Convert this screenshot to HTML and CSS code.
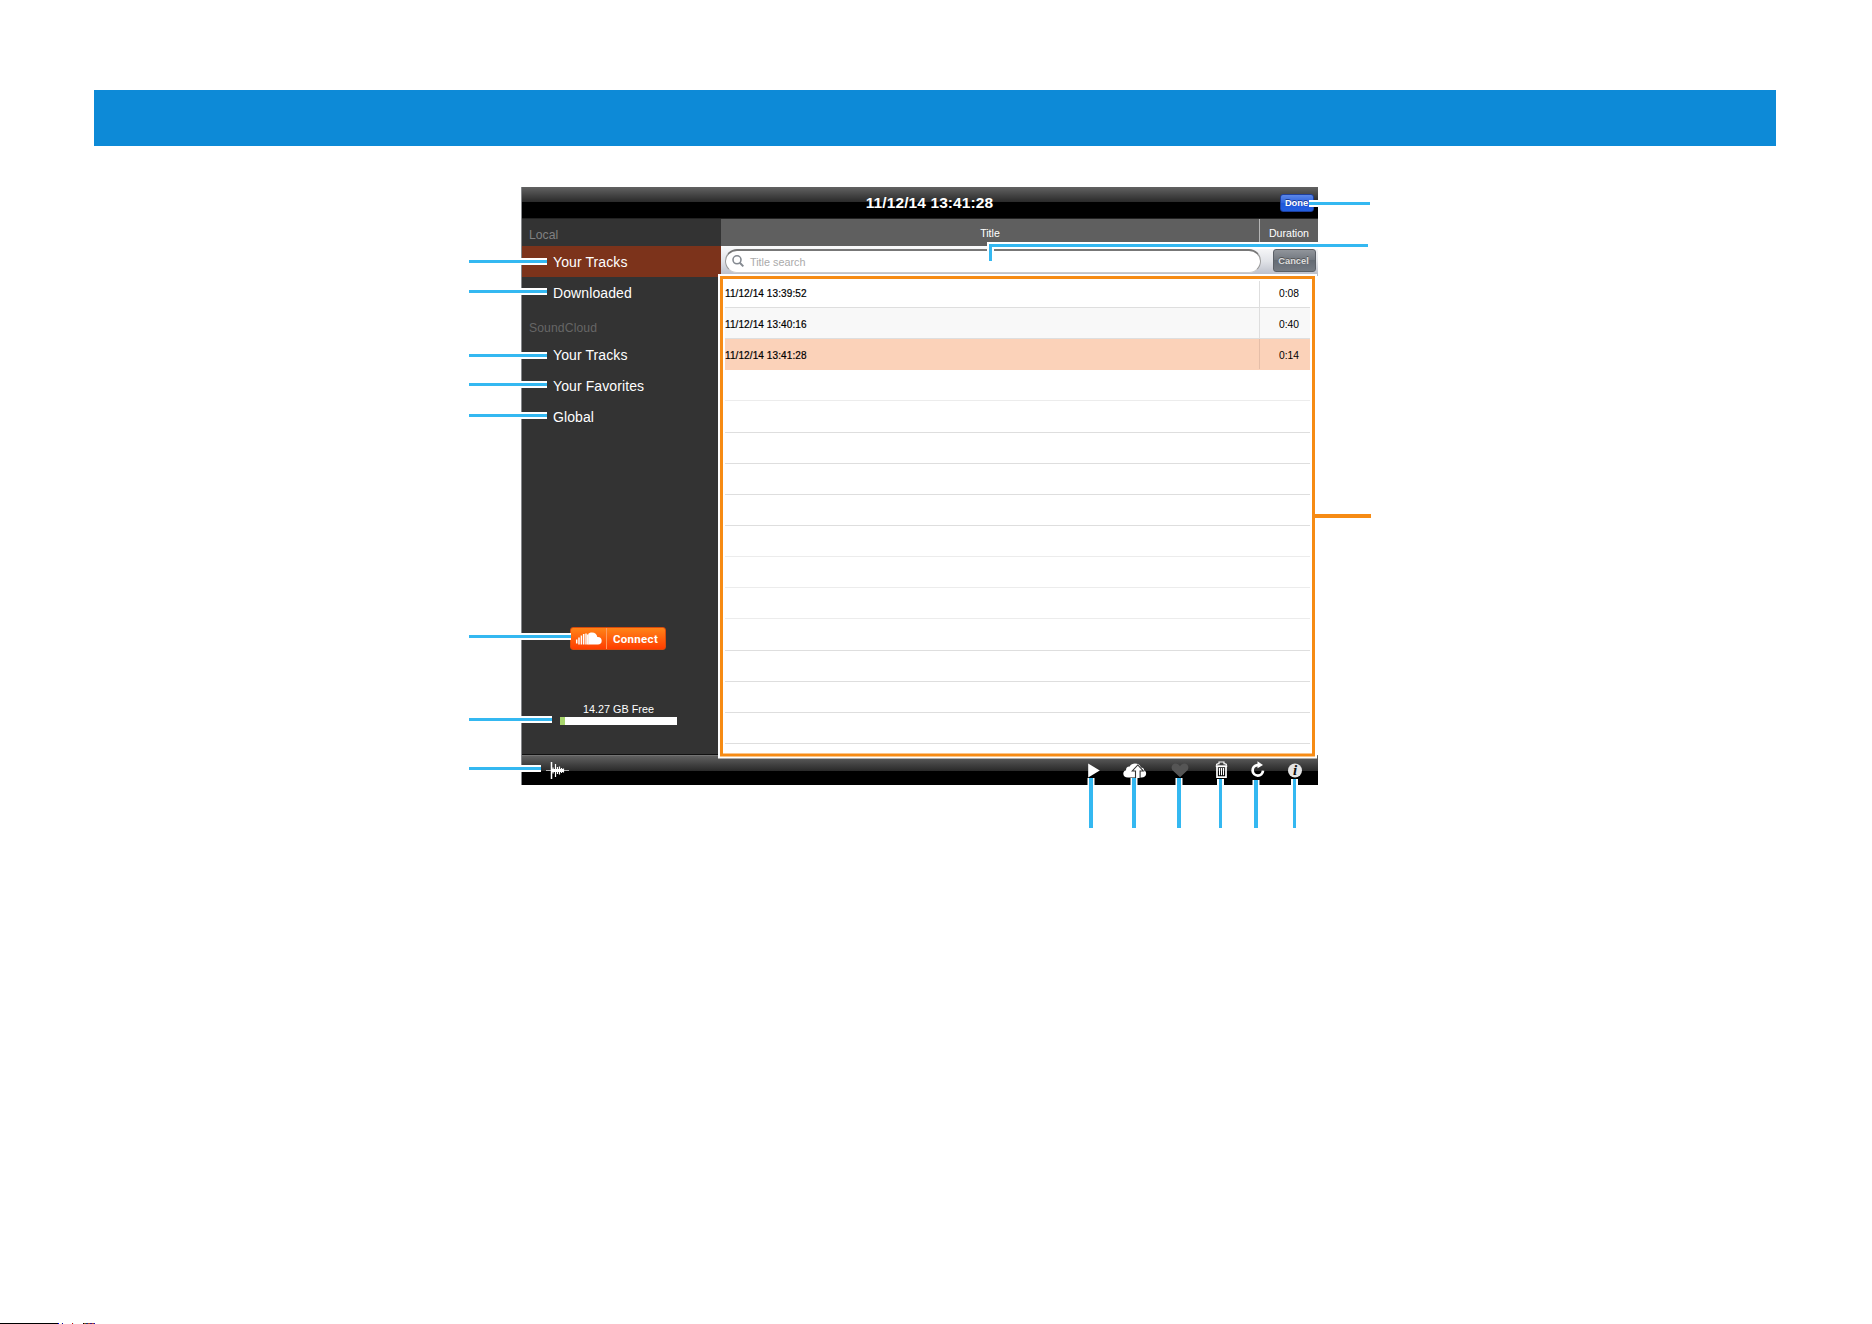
FILE: index.html
```html
<!DOCTYPE html>
<html lang="en">
<head>
  <meta charset="UTF-8" />
  <meta name="viewport" content="width=device-width, initial-scale=1.0" />
  <title>Track list</title>
  <link rel="stylesheet" href="styles.css">
</head>
<body>
  <div class="banner"></div>

  <div class="app">
    <header class="titlebar">
      <h1>11/12/14 13:41:28</h1>
      <button class="done">Done</button>
    </header>

    <div class="main">
      <aside class="sidebar">
        <h2>Local</h2>
        <ul>
          <li class="selected">Your Tracks</li>
          <li>Downloaded</li>
        </ul>
        <h2 class="group">SoundCloud</h2>
        <ul>
          <li>Your Tracks</li>
          <li>Your Favorites</li>
          <li>Global</li>
        </ul>
        <button class="connect">
          <svg width="36" height="23" viewBox="0 0 36 23">
            <path d="M18.300 17.500V6.700c1-.9 2.200-1.300 3.700-1.300 3 0 5 2 5.300 4.600 2.700-.3 4.400 1.300 4.400 3.800s-1.500 3.700-3.700 3.700z" fill="#fff"/>
            <path d="M6.700 12.500v4M9 10.500v7M11.400 8.500v9M13.700 7v10.500M16 6.500v11M17.800 7.500v10" stroke="#fff" stroke-width="1.500"/>
          </svg>
          <span>Connect</span>
        </button>
        <div class="storage">
          <p>14.27 GB Free</p>
          <div class="meter"><div style="width: 4.3%"></div></div>
        </div>
      </aside>

      <section class="content">
        <div class="columns">
          <span>Title</span>
          <span>Duration</span>
        </div>
        <div class="search">
          <div class="field">
            <svg width="14" height="14" viewBox="0 0 14 14" fill="none" stroke="#858a91">
              <circle cx="5" cy="5.800" r="4" stroke-width="1.600"/>
              <path d="M7.800 8.800l3.500 3.600" stroke-width="2"/>
            </svg>
            <span>Title search</span>
          </div>
          <button class="cancel">Cancel</button>
        </div>
        <div class="tracks" id="tracks"></div>
      </section>
    </div>

    <footer class="toolbar">
      <svg class="wave" width="24" height="20" viewBox="0 0 24 20" stroke="#fff">
        <path d="M0 10.500h23" stroke-width=".8" opacity=".8"/>
        <path d="M5.500 2v17" stroke-width="1.500"/>
        <path d="M7 7.500v6M9.500 4v13M11.500 7v7M13.500 6.500v8M15.500 8v5M17.500 8.500v4" stroke-width="1.200"/>
        <path d="M5.500 10.500h12.500" stroke-width="3"/>
      </svg>
      <svg class="play" width="13" height="16" viewBox="0 0 13 16"><path d="M.2 .5l11.600 7-11.600 7z" fill="#fff"/></svg>
      <svg class="cloud" width="24" height="16" viewBox="0 0 24 16">
        <path d="M5 14.500C2 14.500.3 13 .3 10.800c0-1.900 1-3.100 2.700-3.500C2.800 4.600 4.500 3.300 6.700 3.500 7.800 1.500 9.800.6 12 .6c3 0 5.300 1.400 5.900 4 2.100.1 3.300 1.100 3.200 3 1.500.6 2.200 1.800 2 3.400-.3 2.200-1.800 3.500-4.600 3.500z" fill="#fff"/>
        <path d="M12.500 15V8H9.300L14.800 2l5.500 6h-3.200V15" fill="#fff" stroke="#333" stroke-width="1.100"/>
      </svg>
      <svg class="heart" width="18" height="16" viewBox="0 0 18 16"><path d="M9 14.200L2 7.700C.2 5.800.2 3.200 1.700 1.700 3.700-.3 7.300.2 9 3.300c1.700-3.100 5.300-3.600 7.300-1.600 1.500 1.500 1.500 4.100-.3 6z" fill="#555"/></svg>
      <svg class="trash" width="14" height="18" viewBox="0 0 14 18" fill="none" stroke="#fff">
        <path d="M.8 5.200h11.400" stroke-width="1.800"/>
        <path d="M1.500 4.500C1.500 3.200 2.500 2.700 4 2.700V1h5v1.700c1.500 0 2.500.5 2.500 1.800" stroke-width="1.200"/>
        <path d="M2 5.500v10.700h9V5.500" stroke-width="1.700"/>
        <path d="M4.500 7v7.300M6.500 7v7.300M8.500 7v7.300" stroke-width="1.100"/>
      </svg>
      <svg class="reload" width="16" height="18" viewBox="0 0 16 18">
        <path d="M9.500 4.200H7.300a5.200 5.200 0 1 0 5.700 5.500" fill="none" stroke="#fff" stroke-width="2.700"/>
        <path d="M7.500 .3l5.500 3.700-5.500 3.300z" fill="#fff"/>
      </svg>
      <svg class="info" width="14" height="15" viewBox="0 0 14 15">
        <circle cx="7" cy="7.500" r="7" fill="#e4e4e4"/>
        <text x="7" y="12.200" text-anchor="middle">i</text>
      </svg>
    </footer>
  </div>

  <!-- callout lines, a wide white stroke below each coloured one -->
  <svg class="callouts" width="1872" height="900" viewBox="0 0 1872 900">
    <defs>
      <g id="wide">
        <path d="M469 261.500H547M469 291.500H547M469 355.500H547M469 384.500H547M469 415.500H547M469 636.500H571M469 719.500H552M469 768.500H541"/>
        <path d="M1309 203.500H1370M1368 245.500H990.500V261"/>
        <path d="M1220.500 779V828M1294.500 779V828"/>
      </g>
      <path id="thick" d="M1091 778V828M1134 778V828M1179 778V828M1256 780V828"/>
    </defs>
    <use href="#wide" class="halo"/>
    <use href="#thick" class="halo"/>
    <rect x="721.500" y="277.500" width="592" height="477.500" class="halo"/>
    <use href="#wide" class="blue"/>
    <use href="#thick" class="blue thick"/>
    <rect x="721.500" y="277.500" width="592" height="477.500" class="orange"/>
    <path d="M1315 516H1371" class="orange thick"/>
  </svg>

  <div class="edge"></div>

  <script>
    const tracks = [
      { title: "11/12/14 13:39:52", duration: "0:08" },
      { title: "11/12/14 13:40:16", duration: "0:40" },
      { title: "11/12/14 13:41:28", duration: "0:14", selected: true },
    ];

    const list = document.getElementById('tracks');
    for (let i = 0; i < 16; i++) {
      const t = tracks[i];
      const row = document.createElement('div');
      row.className = 'track';
      if (t) {
        if (t.selected) row.classList.add('selected');
        row.innerHTML = `<span>${t.title}</span><span>${t.duration}</span>`;
      }
      list.appendChild(row);
    }
  </script>
</body>
</html>
```

FILE: styles.css
```css
* { box-sizing: border-box; margin: 0; padding: 0; font-family: "Liberation Sans", Arial, sans-serif; }
body { position: relative; width: 1872px; height: 1324px; background: #fff; overflow: hidden; padding-top: 90px; }
ul { list-style: none; }
svg { display: block; flex: none; }
button { border: none; }

.banner { height: 56px; margin: 0 96px 0 94px; background: #0d8ad7; }

.app { width: 797px; height: 598px; margin: 41px 0 0 521px; border-left: 1px solid #85878a; display: flex; flex-direction: column; overflow: hidden; }
.titlebar { height: 32px; flex: none; display: grid; grid-template-columns: 1fr auto 1fr; align-items: center; color: #fff; background: linear-gradient(#626262 0, #2a2a2a 15px, #000 15px, #000 31px, #222 31px); padding: 0 4px 0 23px; }
.titlebar h1 { grid-column: 2; font-size: 15.5px; line-height: 32px; letter-spacing: .1px; white-space: nowrap; }
.done { justify-self: end; width: 34px; height: 18px; border-radius: 3px; border: 1px solid #1d3f9e; background: linear-gradient(#5c87e8, #2c62de 50%, #1f57dc 50%, #2360e0); color: #fff; font-size: 9.3px; font-weight: bold; line-height: 15px; text-shadow: 0 -1px #1a3c90; padding-right: 1px; }

.main { display: flex; height: 536px; flex: none; }
.sidebar { width: 199px; background: #333; color: #fff; padding-top: 1px; border-bottom: 1px solid #111; }
.sidebar h2 { height: 26px; padding-left: 7px; font-size: 12.2px; font-weight: normal; line-height: 30px; color: #818181; }
.sidebar h2.group { height: 31px; color: #666; line-height: 40px; letter-spacing: .1px; }
.sidebar li { height: 31px; padding-left: 31px; font-size: 14px; line-height: 32px; letter-spacing: .1px; }
.sidebar li.selected { background: #7c331b; }
.connect { display: flex; align-items: center; width: 96px; height: 23px; margin: 195px 0 0 48px; border-radius: 3px; border: 1px solid #d84b0b; background: linear-gradient(#ff8418, #ff3d00); color: #fff; }
.connect svg { margin-left: -1px; }
.connect span { border-left: 1px solid #ff9a60; height: 21px; padding-left: 6px; font: bold 11.5px/22px Roboto, sans-serif; letter-spacing: .3px; }
.storage { width: 117px; margin: 52px 0 0 38px; text-align: center; }
.storage p { font-size: 10.8px; line-height: 15px; height: 15px; }
.meter { height: 8px; background: #fff; }
.meter div { height: 8px; background: #a8d56d; }

.content { width: 597px; }
.columns { display: flex; height: 27px; background: #5f5f5f; color: #fff; font-size: 10.6px; line-height: 28px; text-align: center; }
.columns span:first-child { width: 538px; }
.columns span:last-child { width: 59px; border-left: 1px solid #b5b5b5; }
.search { display: flex; align-items: center; height: 30px; padding: 0 2px 1px 4px; background: linear-gradient(#fafafb, #e1e3e8 50%, #b7bbc7); }
.field { display: flex; align-items: center; width: 536px; height: 24px; padding-left: 6px; border: 1px solid #999; border-top: 2px solid #777; border-bottom-color: #ccc; border-radius: 12px; background: #fff; }
.field span { margin-left: 4px; margin-top: 1px; font-size: 10.8px; color: #aaa; }
.cancel { width: 43px; height: 23px; margin-left: 12px; border-radius: 3px; border: 1px solid #5b6067; background: linear-gradient(#91959b, #70767e 50%, #646b74 50%, #747a82); color: #ddd; font-size: 9.3px; font-weight: bold; line-height: 20px; text-shadow: 0 -1px #555; padding-right: 2px; }
.tracks { height: 479px; padding: 0 8px 0 4px; overflow: hidden; background: #fff; }
.track { display: flex; height: 31.15px; border-bottom: 1px solid #dedede; color: #000; font-size: 10px; line-height: 33px; }
.track:first-child { height: 32px; line-height: 35px; }
.track span:first-child { width: 535px; border-right: 1px solid #dedede; letter-spacing: .1px; -webkit-text-stroke: .2px #000; }
.track span:last-child { width: 50px; padding-left: 8px; text-align: center; font-size: 10.3px; }
.track:nth-child(2) { background: #f8f8f8; }
.track:nth-child(4), .track:nth-child(9), .track:nth-child(10), .track:nth-child(11) { border-bottom-color: #ececec; }
.track.selected { background: #fbd2b9; border-bottom-color: #fbd2b9; }
.track.selected span { border-color: #e5bea8; }

.toolbar { display: flex; height: 30px; flex: none; padding-left: 24px; background: linear-gradient(#868686 0, #606060 1px, #292929 16px, #000 16px); }
.wave { margin-top: 5px; }
.play { margin: 8px 0 0 518px; }
.cloud { margin: 8px 0 0 22px; }
.heart { margin: 8px 0 0 24px; }
.trash { margin: 6px 0 0 26px; }
.reload { margin: 6px 0 0 21px; }
.info { margin: 8px 0 0 22px; }
.info text { font: italic bold 15px "Liberation Serif", serif; fill: #111; }

.callouts { position: absolute; left: 0; top: 0; fill: none; }
.halo { stroke: #fff; stroke-width: 7px; }
.blue { stroke: #34b8f1; stroke-width: 3px; }
.orange { stroke: #f68b14; stroke-width: 3px; }
.thick { stroke-width: 4px; }

.edge { position: absolute; left: 0; top: 1323px; width: 96px; height: 1px; background: linear-gradient(90deg, #000 58px, #00f 58px, #00f 59px, #fff 59px, #fff 61px, #ff8 61px, #fff 62px, #00a 62px, #00a 63px, #fff 63px, #fff 72px, #c00 72px, #c00 73px, #8ff 73px, #fff 74px, #fff 83px, #000 83px, #000 84px, #d22 84px, #282 86px, #00a 87px, #d60 89px, #00a 91px, #e50 93px, #228 94px, #00f 95px, #fff 95px); }
```
